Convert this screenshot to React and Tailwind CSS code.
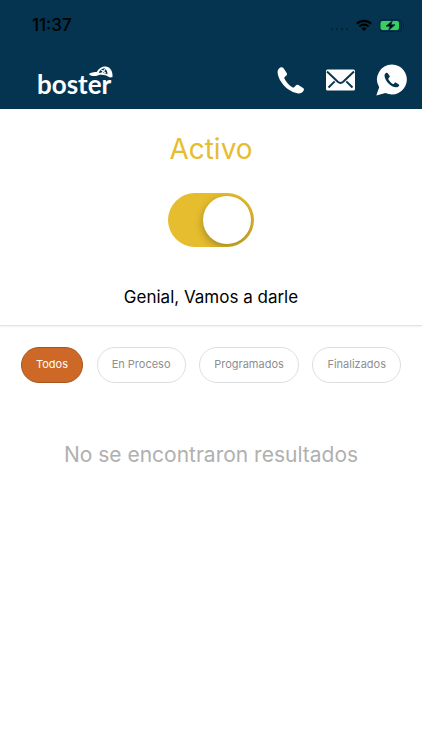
import React, { useState } from 'react'

const filters = ['Todos', 'En Proceso', 'Programados', 'Finalizados']

const handset =
  'M3.2 1.6C1.5 2.6.4 4.300 .6 6.600 1.300 16 12 26.800 21.200 27.400c2.500.2 4.300-.9 5.400-2.700.6-1 .4-2-.5-2.600l-4.700-3c-.9-.6-1.900-.5-2.600.3l-1.400 1.600c-.6.700-1.300.8-2.100.3C11.700 19 9 16 7.500 12.800c-.4-.8-.2-1.500.5-2.100l1.400-1.200c.7-.7.8-1.600.3-2.500L6.400 2.100C5.600 1 4.400.9 3.200 1.600z'

const StatusBar = () => (
  <div className="flex items-center justify-between h-[50px] pl-8 pr-[17px] text-black">
    <span className="text-[17px] leading-5 font-medium">11:37</span>
    <div className="flex items-center gap-[7px]">
      <svg width="19" height="12" viewBox="0 0 19 12" fill="#022438" aria-hidden="true">
        <circle cx="2" cy="10" r="1.200" />
        <circle cx="7" cy="10" r="1.200" />
        <circle cx="12" cy="10" r="1.200" />
        <circle cx="17" cy="10" r="1.200" />
      </svg>
      <svg width="16" height="12" viewBox="0 0 16 12" aria-hidden="true">
        <g fill="none" stroke="currentColor" strokeWidth="2.300">
          <path d="M.9 4.700a10.200 10.200 0 0 1 14.200 0" />
          <path d="M3.500 7.500a6.500 6.500 0 0 1 9 0" />
        </g>
        <path d="M8 12 5.500 9.400a3.600 3.600 0 0 1 5 0z" />
      </svg>
      <svg width="26" height="13" viewBox="0 0 26 13" aria-hidden="true">
        <rect x=".5" y=".5" width="22" height="12" rx="3.500" fill="none" stroke="#022438" />
        <path d="M24 4.500c1.500.7 1.500 3.300 0 4z" fill="#022438" />
        <rect x="1.500" y="2" width="18.500" height="9" rx="2" fill="#35d15c" />
        <path d="M13.500 1.500 7 7.200h4L9.500 11.500 16 5.800h-4z" fill="#000" stroke="#04344f" strokeWidth=".8" />
      </svg>
    </div>
  </div>
)

const Logo = () => (
  <a href="#" className="relative block mt-2 font-['Lato',sans-serif] text-[26px] leading-7 font-bold text-white">
    boster
    <svg className="absolute -top-1 -right-0.5" width="24" height="12" viewBox="0 0 24 12" aria-hidden="true">
      <path d="M0 8.100C1.500 6.200 5 6 8.500 5.900L9.500 9.200C6.500 10.400 1.200 10.700 0 8.100z" fill="#fff" />
      <path d="M7.600 6.200C9.500 2 13.500.2 17 .4c4.500.6 7 5 6.500 10.600-1.300.5-2.700.5-3.700 0-2.700-1.900-6.300-2.600-10.800-1.800z" fill="#fff" />
      <path d="M9.700 6.900c1.200-2.600 3-4.100 5.600-4.600 2.200 1.300 3.200 3.300 3.200 5.900-2.600-1.300-5.500-1.900-8.800-1.300z" fill="#04344f" />
      <path d="m12.300 4 4.400 2.900M16.200 3.200l-3.400 4" stroke="#fff" strokeWidth="1.200" />
    </svg>
  </a>
)

const Header = () => (
  <header className="bg-[#04344f]">
    <StatusBar />
    <div className="flex items-center justify-between h-[59px] pl-[37px] pr-[15px]">
      <Logo />
      <div className="flex items-center gap-[21px] text-white">
        <a href="#telefono" aria-label="Llamar">
          <svg width="28" height="28" viewBox="0 0 28 28" fill="currentColor">
            <path d={handset} />
          </svg>
        </a>
        <a href="#correo" aria-label="Correo">
          <svg width="29" height="22" viewBox="0 0 29 22">
            <rect y=".5" width="29" height="21" rx="1.500" fill="currentColor" />
            <path d="m1 2.500 10.800 10.200c1.700 1.500 3.700 1.500 5.400 0L28 2.500M2.500 18.500l6.200-6.200M26.500 18.500l-6.200-6.200" fill="none" stroke="#04344f" strokeWidth="1.900" />
          </svg>
        </a>
        <a href="#whatsapp" aria-label="WhatsApp">
          <svg width="31" height="32" viewBox="0 0 31 32">
            <path d="M16 .5a15 15 0 1 1-6.500 28.600L.3 31.600l2.900-8.300A15 15 0 0 1 16 .5z" fill="currentColor" />
            <path d={handset} transform="translate(8.200 8) scale(.56)" fill="#04344f" />
          </svg>
        </a>
      </div>
    </div>
  </header>
)

const App = () => {
  const [active, setActive] = useState(true)
  const [filter, setFilter] = useState('Todos')

  return (
    <div className="min-h-screen bg-white font-['Inter',sans-serif]">
      <Header />

      <section className="flex flex-col items-center pt-5 pb-[14px] border-b border-[#e2e2e2] shadow-xs">
        <label htmlFor="estado" className="text-[28px] leading-10 text-[#e6bd2e]">
          {active ? 'Activo' : 'Inactivo'}
        </label>
        <input
          id="estado"
          type="checkbox"
          role="switch"
          checked={active}
          onChange={(e) => setActive(e.target.checked)}
          className="appearance-none flex items-center w-[86px] h-[54px] mt-6 px-[3px] overflow-hidden rounded-full bg-gray-300 checked:bg-[#e6bd2e] checked:justify-end before:content-[''] before:block before:size-12 before:rounded-full before:bg-white before:shadow-[0_3px_8px_rgba(0,0,0,0.3)]"
        />
        <p className="mt-9 text-[17px] leading-7 text-black">Genial, Vamos a darle</p>
      </section>

      <div className="flex justify-between px-[21px] pt-[21px]">
        {filters.map((name) => (
          <button
            key={name}
            type="button"
            onClick={() => setFilter(name)}
            className={
              filter === name
                ? 'h-9 px-[14px] pb-0.5 rounded-full border border-[#a9541c] bg-[#cd6826] text-[11px] text-white'
                : 'h-9 px-[14px] pb-0.5 rounded-full border border-[#dedede] bg-white text-[11px] text-[#8e8e93]'
            }
          >
            {name}
          </button>
        ))}
      </div>

      <p className="mt-14 text-center text-[21px] leading-8 text-[#b0b0b0]">No se encontraron resultados</p>
    </div>
  )
}

export default App
